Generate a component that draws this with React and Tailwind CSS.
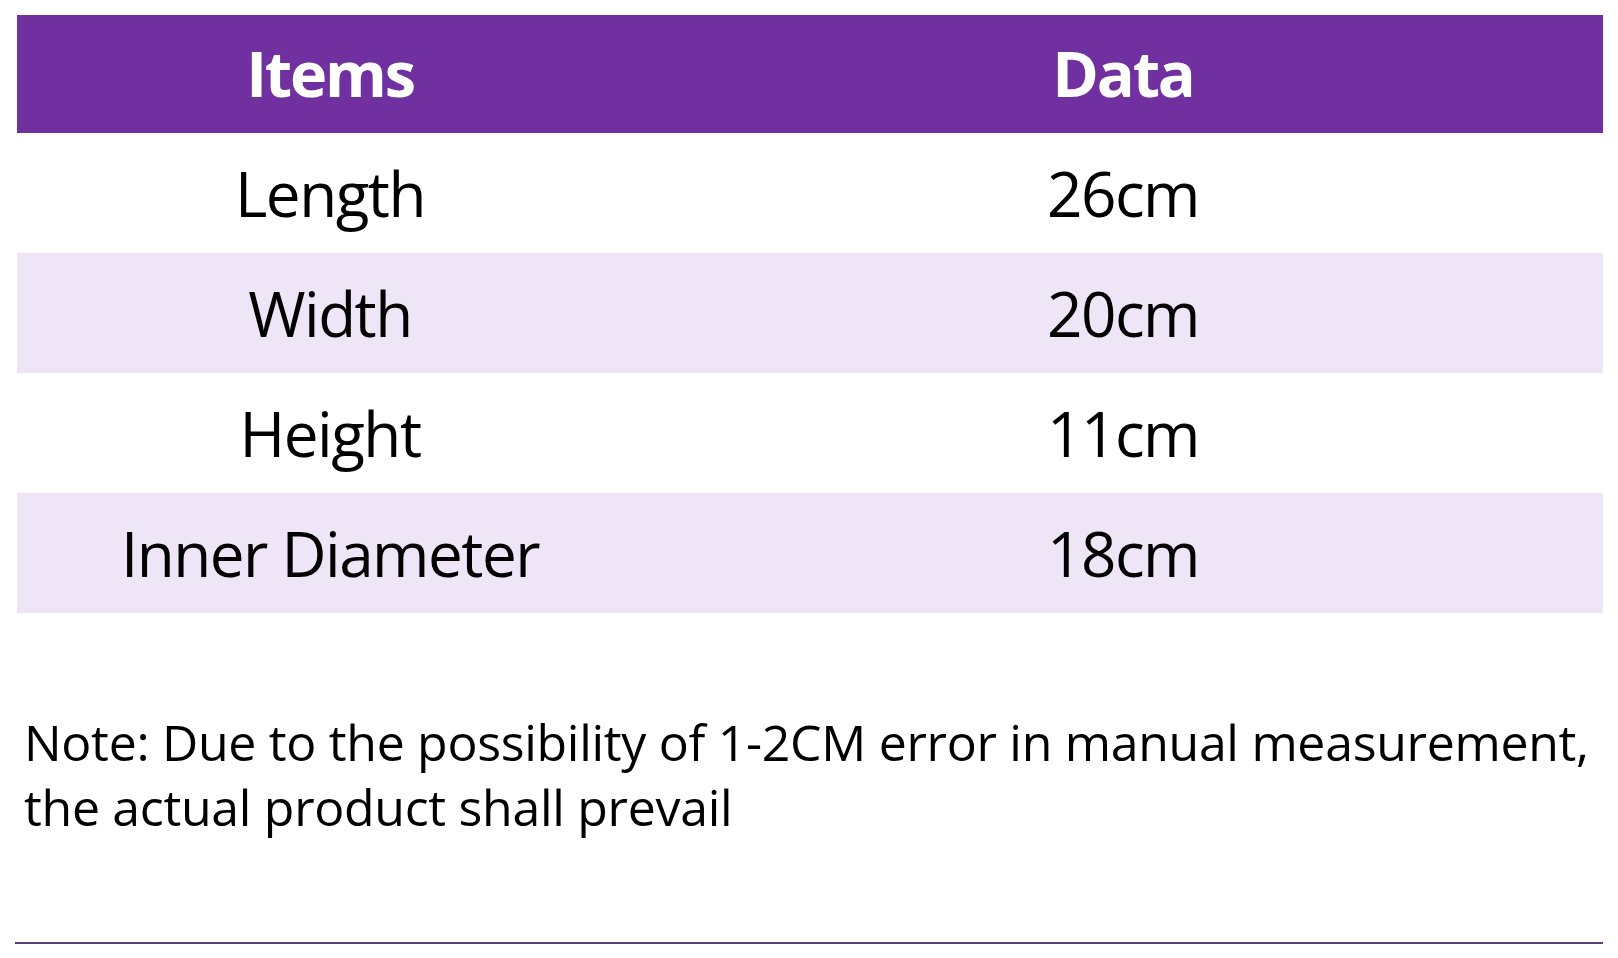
import React from "react";

const rows = [
  { item: "Length", data: "26cm", shade: false },
  { item: "Width", data: "20cm", shade: true },
  { item: "Height", data: "11cm", shade: false },
  { item: "Inner Diameter", data: "18cm", shade: true },
];

export default function App() {
  return (
    <div
      className="w-[1618px] h-[958px] bg-white text-black overflow-hidden"
      style={{ fontFamily: '"Open Sans", "Noto Sans", sans-serif' }}
    >
      <div className="pt-[15px] pl-[17px] pr-[15px]">
        <div className="grid grid-cols-[626px_1fr] bg-[#7030a0] text-white font-bold text-[63px] tracking-[-2.2px] leading-[116px] h-[118px]">
          <div className="text-center">Items</div>
          <div className="text-center">Data</div>
        </div>
        {rows.map((r) => (
          <div
            key={r.item}
            className={`grid grid-cols-[626px_1fr] text-[62px] tracking-[-1.5px] leading-[120px] h-[120px] ${
              r.shade ? "bg-[#eee5f6]" : "bg-white"
            }`}
          >
            <div className="text-center">{r.item}</div>
            <div className="text-center">{r.data}</div>
          </div>
        ))}
      </div>
      <p className="mt-[97px] pl-[24px] text-[50px] tracking-[-0.3px] leading-[65px] whitespace-nowrap">
        Note: Due to the possibility of 1-2CM error in manual measurement,
        <br />
        the actual product shall prevail
      </p>
      <div className="mt-[102px] ml-[15px] w-[1588px] h-[2px] bg-[#5e3f72]" />
    </div>
  );
}
